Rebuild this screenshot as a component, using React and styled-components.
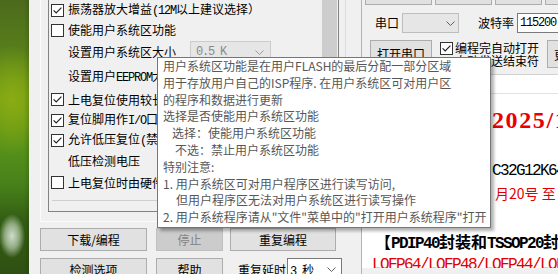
import React from "react";
import styled, { createGlobalStyle } from "styled-components";

const Global = createGlobalStyle`
  html, body { margin: 0; padding: 0; }
  body {
    width: 558px; height: 274px; overflow: hidden; background: #f0f0f0;
    font-family: "Noto Sans CJK SC", "Noto Sans", sans-serif; font-size: 12px; color: #000;
  }
  #root { width: 558px; height: 274px; }
`;

const Screen = styled.div`
  position: relative;
  display: flex;
  width: 558px;
  height: 274px;
  overflow: hidden;
`;

const Wallpaper = styled.div`
  flex: 0 0 29px;
  background:
    linear-gradient(90deg, transparent 0, transparent 24px, rgba(0,0,0,0.12) 29px),
    radial-gradient(ellipse 13px 22px at 12px 236px, rgba(215,228,215,0.95) 0%, rgba(185,205,175,0.7) 55%, rgba(120,150,90,0) 100%),
    radial-gradient(ellipse 34px 55px at 12px 100px, #8aac14 0%, rgba(120,160,16,0) 100%),
    linear-gradient(180deg, #4c6a1c 0%, #58801a 20%, #6e9c12 36%, #55901a 55%, #47801a 68%, #345e14 80%, #2f5012 100%);
`;

const Window = styled.div`
  flex: 1;
  display: flex;
  min-width: 0;
  background: #f0f0f0;
`;

const LeftCol = styled.div`
  flex: 0 0 332px;
  display: flex;
  flex-direction: column;
  padding-left: 11px;
  box-sizing: border-box;
`;

const TabPage = styled.div`
  margin-top: -9px;
  width: 306px;
  height: 231px;
  flex: 0 0 231px;
  box-sizing: border-box;
  border: 1px solid #fbfbfb;
  border-right-color: #dcdcdc;
  padding: 7px 0 0 7px;
`;

const ListBox = styled.div`
  display: flex;
  width: 291px;
  height: 213px;
  box-sizing: border-box;
  border: 1px solid #828282;
  overflow: hidden;
`;

const Options = styled.div`
  flex: 1;
  display: flex;
  flex-direction: column;
  padding-left: 2px;
  min-width: 0;
`;

const OptRow = styled.div`
  display: flex;
  align-items: center;
  gap: 4px;
  height: ${(p) => p.$h}px;
  flex: 0 0 ${(p) => p.$h}px;
  line-height: 14px;
  white-space: nowrap;
`;

const Box = styled.span`
  flex: 0 0 13px;
  width: 13px;
  height: 13px;
  box-sizing: border-box;
  border: 1px solid #333;
  background: #fff;
  display: inline-flex;
`;

const Indent = styled.span`
  flex: 0 0 13px;
`;

const Separator = styled.div`
  margin: 7px 4px 0 1px;
  height: 1px;
  flex: 0 0 1px;
  background: #cfcfcf;
`;

const ScrollBar = styled.div`
  flex: 0 0 17px;
  background: #f0f0f0;
  display: flex;
  flex-direction: column;
`;

const Thumb = styled.div`
  margin: 0 1px;
  height: 130px;
  background: #cdcdcd;
`;

const Half = styled.span`
  font-family: "Liberation Mono", "DejaVu Sans Mono", monospace;
  font-size: ${(p) => p.$fs || 12}px;
  letter-spacing: ${(p) => -(p.$fs || 12) * 0.1}px;
`;

const Combo = styled.div`
  display: flex;
  flex: 0 0 auto;
  align-items: center;
  justify-content: space-between;
  box-sizing: border-box;
  width: ${(p) => p.$w}px;
  height: ${(p) => p.$h}px;
  margin-left: ${(p) => p.$ml || 0}px;
  padding: 0 ${(p) => p.$pr || 5}px 0 ${(p) => p.$pl || 5}px;
  border: 1px solid ${(p) => p.$border};
  background: ${(p) => p.$bg};
  color: ${(p) => p.$color || "#000"};
  white-space: nowrap;
`;

const Button = styled.button`
  display: flex;
  flex: 0 0 auto;
  align-items: center;
  justify-content: center;
  box-sizing: border-box;
  width: ${(p) => p.$w}px;
  height: ${(p) => p.$h || 23}px;
  margin: 0 0 0 ${(p) => p.$ml || 0}px;
  padding: 0;
  font-family: "Noto Sans CJK SC", sans-serif;
  font-size: 12px;
  color: #000;
  background: #e1e1e1;
  border: 1px solid #adadad;
  border-radius: 0;
  white-space: nowrap;
  overflow: hidden;
  &:disabled {
    color: #838383;
    background: #cccccc;
    border-color: #bfbfbf;
  }
`;

const ButtonRow = styled.div`
  display: flex;
  align-items: center;
  margin-top: ${(p) => p.$mt}px;
  height: 23px;
  flex: 0 0 23px;
`;

const Label = styled.span`
  flex: 0 0 auto;
  margin-left: ${(p) => p.$ml || 0}px;
  white-space: nowrap;
  line-height: 14px;
`;

const RightCol = styled.div`
  flex: 1;
  min-width: 0;
  display: flex;
  flex-direction: column;
  border-left: 1px solid #b4b4b4;
  overflow: hidden;
`;

const TabStrip = styled.div`
  display: flex;
  gap: 3px;
  margin-top: -17px;
  padding-left: 3px;
  height: 22px;
  flex: 0 0 22px;
`;

const TabBtn = styled.div`
  flex: 0 0 ${(p) => p.$w}px;
  box-sizing: border-box;
  background: #e1e1e1;
  border: 1px solid #adadad;
`;

const PortRow = styled.div`
  display: flex;
  align-items: center;
  margin-top: 8px;
  padding-left: 13px;
  height: 20px;
  flex: 0 0 20px;
  white-space: nowrap;
`;

const Input = styled.div`
  display: flex;
  align-items: center;
  box-sizing: border-box;
  flex: 0 0 60px;
  height: 20px;
  margin-left: 3px;
  padding-left: 2px;
  background: #fff;
  border: 1px solid #7a7a7a;
`;

const ActionRow = styled.div`
  display: flex;
  align-items: flex-start;
  margin-top: 7px;
  padding-left: 8px;
  height: 28px;
  flex: 0 0 28px;
`;

const CheckGroup = styled.div`
  display: flex;
  flex: 0 0 auto;
  align-items: flex-start;
  margin-left: 8px;
  padding-top: 2px;
`;

const CheckText = styled.div`
  margin: -1px 0 0 2px;
  line-height: 13px;
  white-space: nowrap;
`;

const News = styled.div`
  margin-top: 6px;
  height: 194px;
  flex: 0 0 194px;
  box-sizing: border-box;
  background: #fff;
  border-top: 1px solid #d2d2d2;
  overflow: hidden;
  display: flex;
  flex-direction: column;
`;

const NewsHead = styled.div`
  flex: 0 0 18px;
  border-bottom: 1px solid #e2e2e2;
`;

const NewsLine = styled.div`
  flex: 0 0 ${(p) => p.$h}px;
  height: ${(p) => p.$h}px;
  line-height: ${(p) => p.$h}px;
  margin-top: ${(p) => p.$mt}px;
  padding-left: ${(p) => p.$pl}px;
  white-space: nowrap;
  color: ${(p) => p.$color || "#000"};
  font-size: ${(p) => p.$fs || 16}px;
  font-weight: ${(p) => (p.$bold ? 700 : 400)};
`;

const BigDate = styled.span`
  font-family: "Liberation Serif", serif;
  font-size: 24px;
  font-weight: 700;
  letter-spacing: 1.6px;
`;

const Tooltip = styled.div`
  position: absolute;
  left: 157px;
  top: 57px;
  width: 334px;
  height: 171px;
  box-sizing: border-box;
  padding: 0 5px;
  background: #fff;
  border: 1px solid #767676;
  box-shadow: 3px 3px 3px rgba(0, 0, 0, 0.3);
  color: #575757;
  font-size: 12px;
  line-height: 16.8px;
  white-space: nowrap;
  overflow: hidden;
`;

const TipLine = styled.div`
  padding-left: ${(p) => p.$indent || 0}px;
`;

function Check({ on }) {
  return (
    <Box>
      {on && (
        <svg width="11" height="11" viewBox="0 0 11 11">
          <path d="M1.6 5.4 L4.2 8 L9.4 2.6" fill="none" stroke="#222" strokeWidth="1.2" />
        </svg>
      )}
    </Box>
  );
}

function Chevron({ color = "#606060" }) {
  return (
    <svg width="9" height="5" viewBox="0 0 9 5">
      <path d="M0.5 0.5 L4.5 4.5 L8.5 0.5" fill="none" stroke={color} strokeWidth="1" />
    </svg>
  );
}

const tipLines = [
  { t: "用户系统区功能是在用户FLASH的最后分配一部分区域" },
  { t: "用于存放用户自己的ISP程序. 在用户系统区可对用户区" },
  { t: "的程序和数据进行更新" },
  { t: "选择是否使能用户系统区功能" },
  { t: "选择：使能用户系统区功能", i: 9 },
  { t: "不选：禁止用户系统区功能", i: 12 },
  { t: "特别注意:" },
  { t: "1. 用户系统区可对用户程序区进行读写访问," },
  { t: "但用户程序区无法对用户系统区进行读写操作", i: 13 },
  { t: "2. 用户系统程序请从\"文件\"菜单中的\"打开用户系统程序\"打开" },
];

export default function App() {
  return (
    <>
      <Global />
      <Screen>
        <Wallpaper />
        <Window>
          <LeftCol>
            <TabPage>
              <ListBox>
                <Options>
                  <OptRow $h={20}>
                    <Check on />
                    <span>
                      振荡器放大增益<Half>(12M</Half>以上建议选择）
                    </span>
                  </OptRow>
                  <OptRow $h={20}>
                    <Check />
                    <span>使能用户系统区功能</span>
                  </OptRow>
                  <OptRow $h={24}>
                    <Indent />
                    <span>设置用户系统区大小</span>
                    <Combo $w={81} $h={22} $ml={10} $bg="#e6e6e6" $border="#cccccc" $color="#8a8a8a" $pr={6}>
                      <Half>0.5 K</Half>
                      <Chevron color="#9a9a9a" />
                    </Combo>
                  </OptRow>
                  <OptRow $h={25}>
                    <Indent />
                    <span>
                      设置用户<Half>EEPROM</Half>大小
                    </span>
                    <Combo $w={81} $h={22} $ml={10} $bg="#e6e6e6" $border="#cccccc" $color="#8a8a8a" $pr={6}>
                      <Half>0.5 K</Half>
                      <Chevron color="#9a9a9a" />
                    </Combo>
                  </OptRow>
                  <OptRow $h={21}>
                    <Check on />
                    <span>上电复位使用较长延时</span>
                  </OptRow>
                  <OptRow $h={20}>
                    <Check on />
                    <span>
                      复位脚用作<Half>I/O</Half>口
                    </span>
                  </OptRow>
                  <OptRow $h={20}>
                    <Check on />
                    <span>
                      允许低压复位<Half>(</Half>禁止低压中断<Half>)</Half>
                    </span>
                  </OptRow>
                  <OptRow $h={22}>
                    <Indent />
                    <span>低压检测电压</span>
                  </OptRow>
                  <OptRow $h={21}>
                    <Check />
                    <span>上电复位时由硬件自动启动看门狗</span>
                  </OptRow>
                  <Separator />
                </Options>
                <ScrollBar>
                  <Thumb />
                </ScrollBar>
              </ListBox>
            </TabPage>
            <ButtonRow $mt={6}>
              <Button $w={107}>下载/编程</Button>
              <Button $w={67} $ml={9} disabled>
                停止
              </Button>
              <Button $w={106} $ml={7}>重复编程</Button>
            </ButtonRow>
            <ButtonRow $mt={7}>
              <Button $w={107}>检测选项</Button>
              <Button $w={67} $ml={9}>帮助</Button>
              <Label $ml={15}>重复延时</Label>
              <Combo $w={55} $h={23} $ml={1} $pl={2} $pr={5} $bg="#fff" $border="#7a7a7a">
                <span>
                  <Half>3 </Half>秒
                </span>
                <Chevron />
              </Combo>
            </ButtonRow>
          </LeftCol>
          <RightCol>
            <TabStrip>
              <TabBtn $w={67} />
              <TabBtn $w={57} />
              <TabBtn $w={47} />
              <TabBtn $w={60} />
            </TabStrip>
            <PortRow>
              <Label>串口</Label>
              <Combo $w={57} $h={20} $ml={3} $pr={3} $bg="#e6e6e6" $border="#bdbdbd">
                <span />
                <Chevron />
              </Combo>
              <Label $ml={19}>波特率</Label>
              <Input>
                <Half>115200</Half>
              </Input>
            </PortRow>
            <ActionRow>
              <Button $w={62} $h={26}>
                打开串口
              </Button>
              <CheckGroup>
                <Check on />
                <CheckText>
                  编程完自动打开
                  <br />
                  自动发送结束符
                </CheckText>
              </CheckGroup>
              <Button $w={62} $h={28} $ml={8}>
                更多设置
              </Button>
            </ActionRow>
            <News>
              <NewsHead />
              <NewsLine $h={40} $mt={6} $pl={130} $color="#e80000">
                <BigDate>2025/12/31</BigDate>
              </NewsLine>
              <NewsLine $h={24} $mt={16} $pl={130}>
                <Half $fs={16}>C32G12K64</Half>
              </NewsLine>
              <NewsLine $h={24} $mt={1} $pl={133} $fs={14} $color="#e00000">
                月20号 至
              </NewsLine>
              <NewsLine $h={24} $mt={24} $pl={13} $bold>
                【<Half $fs={16}>PDIP40</Half>封装和<Half $fs={16}>TSSOP20</Half>封装
              </NewsLine>
              <NewsLine $h={18} $mt={0} $pl={10} $color="#e00000">
                <Half $fs={16}>LQFP64/LQFP48/LQFP44/LQFP32</Half>
              </NewsLine>
            </News>
          </RightCol>
        </Window>
        <Tooltip>
          {tipLines.map((l, i) => (
            <TipLine key={i} $indent={l.i}>
              {l.t}
            </TipLine>
          ))}
        </Tooltip>
      </Screen>
    </>
  );
}
